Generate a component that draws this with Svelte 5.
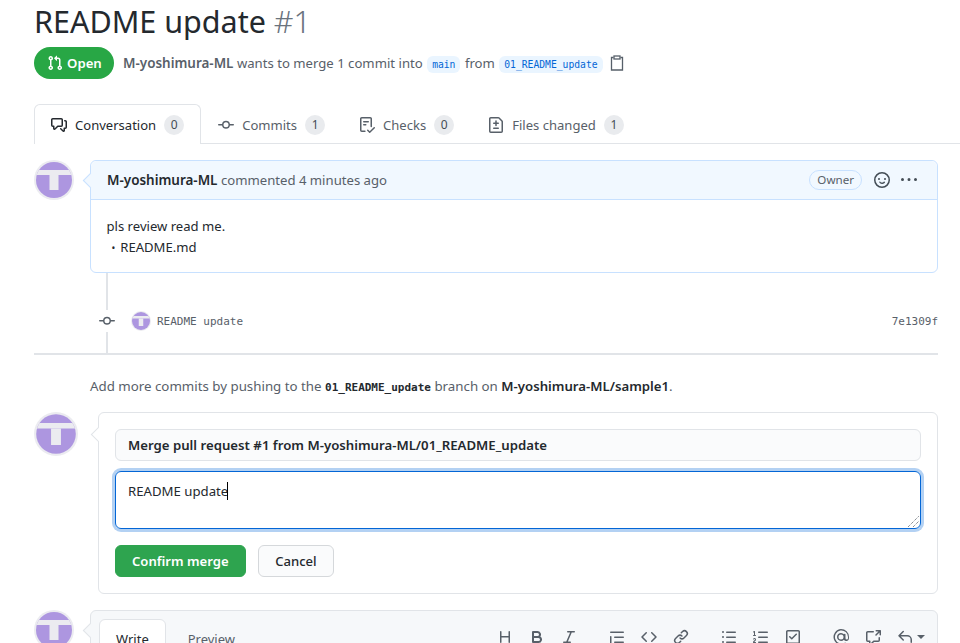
<script>
	const icons = {
		pr: 'M1.5 3.25a2.25 2.25 0 1 1 3 2.122v5.256a2.251 2.251 0 1 1-1.5 0V5.372A2.25 2.25 0 0 1 1.5 3.25Zm5.677-.177L9.573.677A.25.25 0 0 1 10 .854V2.5h1A2.5 2.5 0 0 1 13.5 5v5.628a2.251 2.251 0 1 1-1.5 0V5a1 1 0 0 0-1-1h-1v1.646a.25.25 0 0 1-.427.177L7.177 3.427a.25.25 0 0 1 0-.354ZM3.75 2.5a.75.75 0 1 0 0 1.5.75.75 0 0 0 0-1.5Zm0 9.5a.75.75 0 1 0 0 1.5.75.75 0 0 0 0-1.5Zm8.25.75a.75.75 0 1 0 1.5 0 .75.75 0 0 0-1.5 0Z',
		discussion: 'M1.75 1h8.5c.966 0 1.75.784 1.75 1.75v5.5A1.75 1.75 0 0 1 10.25 10H7.061l-2.574 2.573A1.458 1.458 0 0 1 2 11.543V10h-.25A1.75 1.75 0 0 1 0 8.25v-5.5C0 1.784.784 1 1.75 1ZM1.5 2.75v5.5c0 .138.112.25.25.25h1a.75.75 0 0 1 .75.75v2.19l2.72-2.72a.749.749 0 0 1 .53-.22h3.5a.25.25 0 0 0 .25-.25v-5.5a.25.25 0 0 0-.25-.25h-8.5a.25.25 0 0 0-.25.25Zm13 2a.25.25 0 0 0-.25-.25h-.5a.75.75 0 0 1 0-1.5h.5c.966 0 1.75.784 1.75 1.75v5.5A1.75 1.75 0 0 1 14.25 12H14v1.543a1.458 1.458 0 0 1-2.487 1.03L9.22 12.28a.749.749 0 0 1 .326-1.275.749.749 0 0 1 .734.215l2.22 2.22v-2.19a.75.75 0 0 1 .75-.75h1a.25.25 0 0 0 .25-.25Z',
		commit: 'M11.93 8.5a4.002 4.002 0 0 1-7.86 0H.75a.75.75 0 0 1 0-1.5h3.32a4.002 4.002 0 0 1 7.86 0h3.32a.75.75 0 0 1 0 1.5Zm-1.43-.75a2.5 2.5 0 1 0-5 0 2.5 2.5 0 0 0 5 0Z',
		checklist: 'M2.5 1.75v11.5c0 .138.112.25.25.25h3.17a.75.75 0 0 1 0 1.5H2.75A1.75 1.75 0 0 1 1 13.25V1.75C1 .784 1.784 0 2.75 0h8.5C12.216 0 13 .784 13 1.75v7.736a.75.75 0 0 1-1.5 0V1.75a.25.25 0 0 0-.25-.25h-8.5a.25.25 0 0 0-.25.25Zm13.274 9.537v-.001l-4.557 4.45a.75.75 0 0 1-1.055-.008l-1.943-1.95a.75.75 0 0 1 1.062-1.058l1.419 1.425 4.026-3.932a.75.75 0 1 1 1.048 1.074ZM4.75 4h4.5a.75.75 0 0 1 0 1.5h-4.5a.75.75 0 0 1 0-1.5ZM4 7.75A.75.75 0 0 1 4.75 7h2a.75.75 0 0 1 0 1.5h-2A.75.75 0 0 1 4 7.75Z',
		diff: 'M1 1.75C1 .784 1.784 0 2.75 0h7.586c.464 0 .909.184 1.237.513l2.914 2.914c.329.328.513.773.513 1.237v9.586A1.75 1.75 0 0 1 13.25 16H2.75A1.75 1.75 0 0 1 1 14.25Zm1.75-.25a.25.25 0 0 0-.25.25v12.5c0 .138.112.25.25.25h10.5a.25.25 0 0 0 .25-.25V4.664a.25.25 0 0 0-.073-.177l-2.914-2.914a.25.25 0 0 0-.177-.073ZM8 3.25a.75.75 0 0 1 .75.75v1.5h1.5a.75.75 0 0 1 0 1.5h-1.5v1.5a.75.75 0 0 1-1.5 0V7h-1.5a.75.75 0 0 1 0-1.5h1.5V4A.75.75 0 0 1 8 3.25Zm-3 8a.75.75 0 0 1 .75-.75h4.5a.75.75 0 0 1 0 1.5h-4.5a.75.75 0 0 1-.75-.75Z',
		smiley: 'M8 0a8 8 0 1 1 0 16A8 8 0 0 1 8 0ZM1.5 8a6.5 6.5 0 1 0 13 0 6.5 6.5 0 0 0-13 0Zm3.82 1.636a.75.75 0 0 1 1.038.175l.007.009c.103.118.22.222.35.31.264.178.683.37 1.285.37.602 0 1.02-.192 1.285-.371.13-.088.247-.192.35-.31l.007-.008a.75.75 0 0 1 1.222.87c-.16.22-.34.41-.55.57-.63.418-1.37.638-2.127.629-.946 0-1.652-.308-2.126-.63a3.331 3.331 0 0 1-.715-.657.75.75 0 0 1 .183-1.044ZM12 7a1 1 0 1 1-2 0 1 1 0 0 1 2 0ZM6 7a1 1 0 1 1-2 0 1 1 0 0 1 2 0Z',
		kebab: 'M8 9a1.5 1.5 0 1 0 0-3 1.5 1.5 0 0 0 0 3ZM1.5 9a1.5 1.5 0 1 0 0-3 1.5 1.5 0 0 0 0 3Zm13 0a1.5 1.5 0 1 0 0-3 1.5 1.5 0 0 0 0 3Z'
	};

	const toolbarGroups = [
		[
			'M3.75 2a.75.75 0 0 1 .75.75V7h7V2.75a.75.75 0 0 1 1.5 0v10.5a.75.75 0 0 1-1.5 0V8.5h-7v4.75a.75.75 0 0 1-1.5 0V2.75A.75.75 0 0 1 3.75 2Z',
			'M4 2h4.5a3.501 3.501 0 0 1 2.852 5.53A3.499 3.499 0 0 1 9.5 14H4a1 1 0 0 1-1-1V3a1 1 0 0 1 1-1Zm1 7v3h4.5a1.5 1.5 0 0 0 0-3Zm3.5-2a1.5 1.5 0 0 0 0-3H5v3Z',
			'M6 2.75A.75.75 0 0 1 6.75 2h6.5a.75.75 0 0 1 0 1.5h-2.505l-3.858 9H9.25a.75.75 0 0 1 0 1.5h-6.5a.75.75 0 0 1 0-1.5h2.505l3.858-9H6.75A.75.75 0 0 1 6 2.75Z'
		],
		[
			'M1.75 2.5h12.5a.75.75 0 0 1 0 1.5H1.75a.75.75 0 0 1 0-1.5Zm4 5h8.5a.75.75 0 0 1 0 1.5h-8.5a.75.75 0 0 1 0-1.5Zm0 5h8.5a.75.75 0 0 1 0 1.5h-8.5a.75.75 0 0 1 0-1.5ZM2.5 7.75v6a.75.75 0 0 1-1.5 0v-6a.75.75 0 0 1 1.5 0Z',
			'm11.28 3.22 4.25 4.25a.75.75 0 0 1 0 1.06l-4.25 4.25a.749.749 0 0 1-1.275-.326.749.749 0 0 1 .215-.734L13.94 8l-3.72-3.72a.749.749 0 0 1 .326-1.275.749.749 0 0 1 .734.215Zm-6.56 0a.751.751 0 0 1 1.042.018.751.751 0 0 1 .018 1.042L2.06 8l3.72 3.72a.749.749 0 0 1-.326 1.275.749.749 0 0 1-.734-.215L.47 8.53a.75.75 0 0 1 0-1.06Z',
			'm7.775 3.275 1.25-1.25a3.5 3.5 0 1 1 4.95 4.95l-2.5 2.5a3.5 3.5 0 0 1-4.95 0 .751.751 0 0 1 .018-1.042.751.751 0 0 1 1.042-.018 1.998 1.998 0 0 0 2.83 0l2.5-2.5a2.002 2.002 0 0 0-2.83-2.83l-1.25 1.25a.751.751 0 0 1-1.042-.018.751.751 0 0 1-.018-1.042Zm-4.69 9.64a1.998 1.998 0 0 0 2.83 0l1.25-1.25a.751.751 0 0 1 1.042.018.751.751 0 0 1 .018 1.042l-1.25 1.25a3.5 3.5 0 1 1-4.95-4.95l2.5-2.5a3.5 3.5 0 0 1 4.95 0 .751.751 0 0 1-.018 1.042.751.751 0 0 1-1.042.018 1.998 1.998 0 0 0-2.83 0l-2.5 2.5a1.998 1.998 0 0 0 0 2.83Z'
		],
		[
			'M5.75 2.5h8.5a.75.75 0 0 1 0 1.5h-8.5a.75.75 0 0 1 0-1.5Zm0 5h8.5a.75.75 0 0 1 0 1.5h-8.5a.75.75 0 0 1 0-1.5Zm0 5h8.5a.75.75 0 0 1 0 1.5h-8.5a.75.75 0 0 1 0-1.5ZM2 14a1 1 0 1 1 0-2 1 1 0 0 1 0 2Zm1-6a1 1 0 1 1-2 0 1 1 0 0 1 2 0ZM2 4a1 1 0 1 1 0-2 1 1 0 0 1 0 2Z',
			'M5 3.25a.75.75 0 0 1 .75-.75h8.5a.75.75 0 0 1 0 1.5h-8.5A.75.75 0 0 1 5 3.25Zm0 5a.75.75 0 0 1 .75-.75h8.5a.75.75 0 0 1 0 1.5h-8.5A.75.75 0 0 1 5 8.25Zm0 5a.75.75 0 0 1 .75-.75h8.5a.75.75 0 0 1 0 1.5h-8.5a.75.75 0 0 1-.75-.75ZM.924 10.32a.5.5 0 0 1-.851-.525c.097-.144.215-.273.348-.384.228-.19.588-.392 1.068-.392.468 0 .858.181 1.126.484.259.294.377.673.377 1.038 0 .987-.686 1.495-1.156 1.845-.303.225-.522.4-.654.597h1.357a.5.5 0 0 1 0 1H.5a.5.5 0 0 1-.5-.5c0-1.005.692-1.52 1.167-1.875.531-.396.8-.625.8-1.078a.57.57 0 0 0-.128-.376C1.806 10.068 1.695 10 1.5 10a.658.658 0 0 0-.429.163.835.835 0 0 0-.144.153ZM2.003 2.5V6h.503a.5.5 0 0 1 0 1H.5a.5.5 0 0 1 0-1h.503V3.308l-.28.14a.5.5 0 0 1-.446-.895l1.003-.5a.5.5 0 0 1 .723.447Z',
			'M2.75 1h10.5c.966 0 1.75.784 1.75 1.75v10.5A1.75 1.75 0 0 1 13.25 15H2.75A1.75 1.75 0 0 1 1 13.25V2.75C1 1.784 1.784 1 2.75 1Zm0 1.5a.25.25 0 0 0-.25.25v10.5c0 .138.112.25.25.25h10.5a.25.25 0 0 0 .25-.25V2.75a.25.25 0 0 0-.25-.25Zm9.03 3.28-4.5 4.5a.75.75 0 0 1-1.06 0l-2-2a.75.75 0 1 1 1.06-1.06l1.47 1.47 3.97-3.97a.75.75 0 1 1 1.06 1.06Z'
		],
		[
			'M8 0a8 8 0 0 1 8 8v1.25a2.75 2.75 0 0 1-5.07 1.47A4 4 0 1 1 11 5.35a.75.75 0 0 1 1.5.15v3.75a1.25 1.25 0 0 0 2.5 0V8a6.5 6.5 0 1 0-3.25 5.63.75.75 0 0 1 .75 1.3A8 8 0 1 1 8 0Zm2.5 8a2.5 2.5 0 1 0-5 0 2.5 2.5 0 0 0 5 0Z',
			'M2.75 3.5a.25.25 0 0 0-.25.25v7.5c0 .138.112.25.25.25h2a.75.75 0 0 1 .75.75v2.19l2.72-2.72a.749.749 0 0 1 .53-.22h4.5a.25.25 0 0 0 .25-.25v-2.5a.75.75 0 0 1 1.5 0v2.5A1.75 1.75 0 0 1 13.25 13H9.06l-2.573 2.573A1.458 1.458 0 0 1 4 14.543V13H2.75A1.75 1.75 0 0 1 1 11.25v-7.5C1 2.784 1.784 2 2.75 2h5.5a.75.75 0 0 1 0 1.5ZM13.44 2.5h-2.19a.75.75 0 0 1 0-1.5h4a.75.75 0 0 1 .75.75v4a.75.75 0 0 1-1.5 0V3.56l-2.97 2.97a.75.75 0 0 1-1.06-1.06Z',
			'M6.78 1.97a.75.75 0 0 1 0 1.06L3.81 6h6.44A4.75 4.75 0 0 1 15 10.75v2.5a.75.75 0 0 1-1.5 0v-2.5a3.25 3.25 0 0 0-3.25-3.25H3.81l2.97 2.97a.749.749 0 0 1-.326 1.275.749.749 0 0 1-.734-.215L1.47 7.28a.75.75 0 0 1 0-1.06l4.25-4.25a.75.75 0 0 1 1.06 0Z'
		]
	];

	const tabs = [
		{ label: 'Conversation', count: 0, icon: icons.discussion, selected: true },
		{ label: 'Commits', count: 1, icon: icons.commit },
		{ label: 'Checks', count: 0, icon: icons.checklist },
		{ label: 'Files changed', count: 1, icon: icons.diff }
	];
</script>

{#snippet avatar(size)}
	<svg class="avatar" width={size} height={size} viewBox="0 0 40 40">
		<circle cx="20" cy="20" r="20" fill="#ebebf0" />
		<clipPath id="avatar-{size}"><circle cx="20" cy="20" r="18" /></clipPath>
		<g clip-path="url(#avatar-{size})">
			<rect width="40" height="40" fill="#ad96e0" />
			<rect y="10" width="40" height="5" fill="#ebebf0" />
			<rect x="15.5" y="15" width="9" height="15" fill="#ebebf0" />
		</g>
	</svg>
{/snippet}

<div class="page">
	<h1>README update <span class="num">#1</span></h1>

	<div class="state-row">
		<span class="state">
			<svg width="16" height="16" viewBox="0 0 16 16" fill="currentColor"><path d={icons.pr} /></svg>
			Open
		</span>
		<span class="meta">
			<b>M-yoshimura-ML</b> wants to merge 1 commit into
			<code class="branch">main</code> from
			<code class="branch">01_README_update</code>
		</span>
		<svg class="copy" width="16" height="16" viewBox="0 0 16 16" fill="none" stroke="#57606a" stroke-width="1.3">
			<path d="M4.5 2.5H2.5v12.5h11V2.5h-2" />
			<rect x="5" y="1" width="6" height="3" />
		</svg>
	</div>

	<nav class="tabs">
		{#each tabs as tab}
			<div class="tab" class:selected={tab.selected}>
				<svg width="16" height="16" viewBox="0 0 16 16" fill="currentColor"><path d={tab.icon} /></svg>
				<span class="tab-label">{tab.label}</span>
				<span class="counter">{tab.count}</span>
			</div>
		{/each}
	</nav>

	<section class="comment-row">
		{@render avatar(40)}
		<div class="comment">
			<header class="comment-head">
				<span class="comment-title"><b>M-yoshimura-ML</b> commented 4 minutes ago</span>
				<span class="owner">Owner</span>
				<svg class="smiley" width="16" height="16" viewBox="0 0 16 16" fill="currentColor"><path d={icons.smiley} /></svg>
				<svg class="kebab" width="16" height="16" viewBox="0 0 16 16" fill="currentColor"><path d={icons.kebab} /></svg>
			</header>
			<div class="comment-body">
				<p>pls review read me.</p>
				<ul><li>README.md</li></ul>
			</div>
		</div>
	</section>

	<div class="timeline">
		<svg class="commit-icon" width="16" height="16" viewBox="0 0 16 16" fill="currentColor"><path d={icons.commit} /></svg>
		{@render avatar(20)}
		<code class="commit-msg">README update</code>
		<code class="sha">7e1309f</code>
	</div>

	<p class="hint">
		Add more commits by pushing to the <code>01_README_update</code> branch on <b>M-yoshimura-ML/sample1</b>.
	</p>

	<section class="merge-row">
		{@render avatar(44)}
		<div class="merge-box">
			<div class="merge-title">Merge pull request #1 from M-yoshimura-ML/01_README_update</div>
			<div class="merge-msg">
				<span>README update</span><i class="caret"></i>
				<svg class="grip" width="12" height="12" viewBox="0 0 12 12" stroke="#57606a" stroke-width="1" stroke-dasharray="1 1">
					<path d="M1 12 12 1M6 12l6-6" />
				</svg>
			</div>
			<div class="merge-actions">
				<span class="btn primary">Confirm merge</span>
				<span class="btn">Cancel</span>
			</div>
		</div>
	</section>

	<section class="reply-row">
		{@render avatar(40)}
		<div class="reply">
			<div class="reply-tab active">Write</div>
			<div class="reply-tab">Preview</div>
			<div class="toolbar">
				{#each toolbarGroups as group}
					<div class="tool-group">
						{#each group as d}
							<svg width="16" height="16" viewBox="0 0 16 16" fill="currentColor"><path {d} /></svg>
						{/each}
					</div>
				{/each}
				<span class="drop"></span>
			</div>
		</div>
	</section>
</div>

<style>
	:global(body) {
		margin: 0;
		background: #fff;
	}

	.page {
		height: 643px;
		overflow: hidden;
		box-sizing: border-box;
		padding: 0 22px 0 34px;
		font-family: "Noto Sans", "Open Sans", sans-serif;
		font-size: 13.2px;
		color: #24292e;
	}

	h1 {
		margin: 0;
		font-size: 30.5px;
		font-weight: 400;
		line-height: 43px;
	}

	.num {
		color: #6a737d;
		font-weight: 300;
	}

	code {
		font-family: "DejaVu Sans Mono", "Liberation Mono", monospace;
	}

	b {
		font-weight: 600;
	}

	.avatar {
		flex: none;
	}

	.state-row {
		display: flex;
		align-items: center;
		margin-top: 4px;
	}

	.state {
		display: inline-flex;
		align-items: center;
		gap: 4px;
		height: 32px;
		width: 80px;
		box-sizing: border-box;
		padding-left: 13px;
		border-radius: 16px;
		background: #28a745;
		color: #fff;
		font-weight: 600;
	}

	.meta {
		margin-left: 9px;
		color: #586069;
		font-size: 13.15px;
	}

	.meta b {
		color: #586069;
		font-size: 13.45px;
	}

	.branch {
		padding: 3px 5px;
		border-radius: 6px;
		background: #eaf5ff;
		color: #0366d6;
		font-size: 9.7px;
		margin: 0 1px;
	}

	.copy {
		margin-left: 5px;
	}

	.tabs {
		display: flex;
		margin-top: 25px;
		border-bottom: 1px solid #e1e4e8;
		margin-right: -22px;
		height: 39px;
		font-size: 13.05px;
	}

	.tab {
		display: flex;
		align-items: center;
		padding: 0 16px;
		color: #586069;
		border: 1px solid transparent;
		border-bottom: 0;
		box-sizing: border-box;
		height: 40px;
	}

	.tab.selected {
		background: #fff;
		color: #24292e;
		border-color: #e1e4e8;
		border-radius: 6px 6px 0 0;
	}

	.tab-label {
		margin-left: 8px;
	}

	.counter {
		margin-left: 8px;
		min-width: 20px;
		height: 20px;
		line-height: 20px;
		text-align: center;
		border-radius: 10px;
		background: #e9ebee;
		color: #444d56;
		font-size: 12px;
	}

	.comment-row {
		display: flex;
		margin-top: 16px;
		gap: 16px;
	}

	.comment {
		position: relative;
		flex: 1;
		border: 1px solid #c8e1ff;
		border-radius: 6px;
	}

	.comment::before {
		content: "";
		position: absolute;
		left: -6px;
		top: 14px;
		width: 10px;
		height: 10px;
		transform: rotate(45deg);
		background: #f1f8ff;
		border-left: 1px solid #c8e1ff;
		border-bottom: 1px solid #c8e1ff;
	}

	.comment-head {
		display: flex;
		align-items: center;
		height: 38px;
		padding: 0 20px 0 16px;
		background: #f1f8ff;
		border-bottom: 1px solid #c8e1ff;
		border-radius: 6px 6px 0 0;
	}

	.comment-title {
		flex: 1;
		color: #586069;
		font-size: 13.15px;
	}

	.comment-title b {
		color: #24292e;
		font-size: 13.45px;
	}

	.owner {
		height: 18px;
		line-height: 18px;
		padding: 0 7px;
		border: 1px solid #c8e1ff;
		border-radius: 10px;
		font-size: 11.6px;
		color: #586069;
	}

	.smiley {
		margin-left: 12px;
		color: #444d56;
	}

	.kebab {
		margin-left: 11px;
		color: #444d56;
	}

	.comment-body {
		padding: 16px 16px 15px 15.5px;
		height: 41px;
		line-height: 21px;
		font-size: 13.1px;
	}

	.comment-body p {
		margin: 0;
	}

	.comment-body ul {
		margin: 0;
		padding-left: 13px;
		list-style: none;
	}

	.comment-body li::before {
		content: "•";
		font-size: 10px;
		margin: 0 5px 0 -8px;
	}

	.timeline {
		position: relative;
		display: flex;
		align-items: center;
		box-sizing: border-box;
		height: 80px;
		margin-left: 65px;
		padding: 16px 0 0 32px;
	}

	.timeline::before {
		content: "";
		position: absolute;
		left: 7px;
		top: 0;
		bottom: 0;
		width: 2px;
		background: #e1e4e8;
	}

	.commit-icon {
		position: absolute;
		left: 0;
		top: 37px;
		background: #fff;
		color: #586069;
		padding: 3px 0;
	}

	.commit-msg {
		padding-left: 6px;
		color: #586069;
		flex: 1;
		font-size: 11px;
	}

	.sha {
		font-size: 11px;
		color: #586069;
	}

	.hint {
		margin: 0 0 0 56px;
		padding-top: 24px;
		color: #586069;
		position: relative;
		line-height: 19px;
		height: 18px;
		font-size: 13.3px;
	}

	.hint::before {
		content: "";
		position: absolute;
		left: -56px;
		right: 0;
		top: 0;
		height: 2px;
		background: #e1e4e8;
	}

	.hint code {
		color: #24292e;
		font-size: 11px;
		font-weight: 700;
	}

	.hint b {
		color: #24292e;
		font-size: 13.2px;
	}

	.merge-row {
		display: flex;
		gap: 20px;
		margin-top: 17px;
	}

	.merge-box {
		position: relative;
		flex: 1;
		box-sizing: border-box;
		height: 182px;
		padding: 16px;
		border: 1px solid #e1e4e8;
		border-radius: 6px;
	}

	.merge-box::before {
		content: "";
		position: absolute;
		left: -6px;
		top: 16px;
		width: 10px;
		height: 10px;
		transform: rotate(45deg);
		background: #fff;
		border-left: 1px solid #e1e4e8;
		border-bottom: 1px solid #e1e4e8;
	}

	.merge-title {
		box-sizing: border-box;
		height: 32px;
		line-height: 30px;
		padding: 0 12px;
		background: #fafbfc;
		border: 1px solid #e1e4e8;
		border-radius: 6px;
		font-weight: 600;
	}

	.merge-msg {
		position: relative;
		box-sizing: border-box;
		height: 58px;
		margin-top: 10px;
		padding: 9px 12px;
		line-height: 20px;
		border: 1px solid #0366d6;
		border-radius: 6px;
		box-shadow: 0 0 0 3px rgba(3, 102, 214, 0.3);
	}

	.caret {
		display: inline-block;
		width: 1px;
		height: 18px;
		vertical-align: -4px;
		background: #000;
		margin-left: -1px;
	}

	.grip {
		position: absolute;
		right: 1px;
		bottom: 1px;
	}

	.merge-actions {
		display: flex;
		gap: 12.5px;
		margin-top: 16px;
		font-size: 13.1px;
	}

	.btn {
		box-sizing: border-box;
		height: 32px;
		line-height: 30px;
		padding: 0 16px;
		background: #fafbfc;
		border: 1px solid #d5d8db;
		border-radius: 6px;
		font-weight: 500;
	}

	.btn.primary {
		background: #2ea44f;
		border-color: #2ea44f;
		color: #fff;
		font-weight: 600;
	}

	.reply-row {
		display: flex;
		gap: 16px;
		margin-top: 16px;
	}

	.reply {
		position: relative;
		flex: 1;
		display: flex;
		align-items: flex-start;
		height: 60px;
		padding: 8px 8px 0;
		box-sizing: border-box;
		background: #f6f8fa;
		border: 1px solid #e1e4e8;
		border-radius: 6px 6px 0 0;
	}

	.reply::before {
		content: "";
		position: absolute;
		left: -6px;
		top: 14px;
		width: 10px;
		height: 10px;
		transform: rotate(45deg);
		background: #f6f8fa;
		border-left: 1px solid #e1e4e8;
		border-bottom: 1px solid #e1e4e8;
	}

	.reply-tab {
		box-sizing: border-box;
		height: 40px;
		padding: 10px 16px;
		margin-left: 5px;
		color: #586069;
		border: 1px solid transparent;
		font-size: 13px;
	}

	.reply-tab.active {
		margin-left: 0;
		background: #fff;
		color: #24292e;
		border-color: #e1e4e8;
		border-radius: 6px 6px 0 0;
	}

	.toolbar {
		position: absolute;
		right: 24px;
		top: 18px;
		display: flex;
		gap: 32px;
		color: #586069;
	}

	.tool-group {
		display: flex;
		gap: 16px;
	}

	.drop {
		position: absolute;
		right: -12px;
		top: 6px;
		border: 4px solid transparent;
		border-top-color: #586069;
	}
</style>
